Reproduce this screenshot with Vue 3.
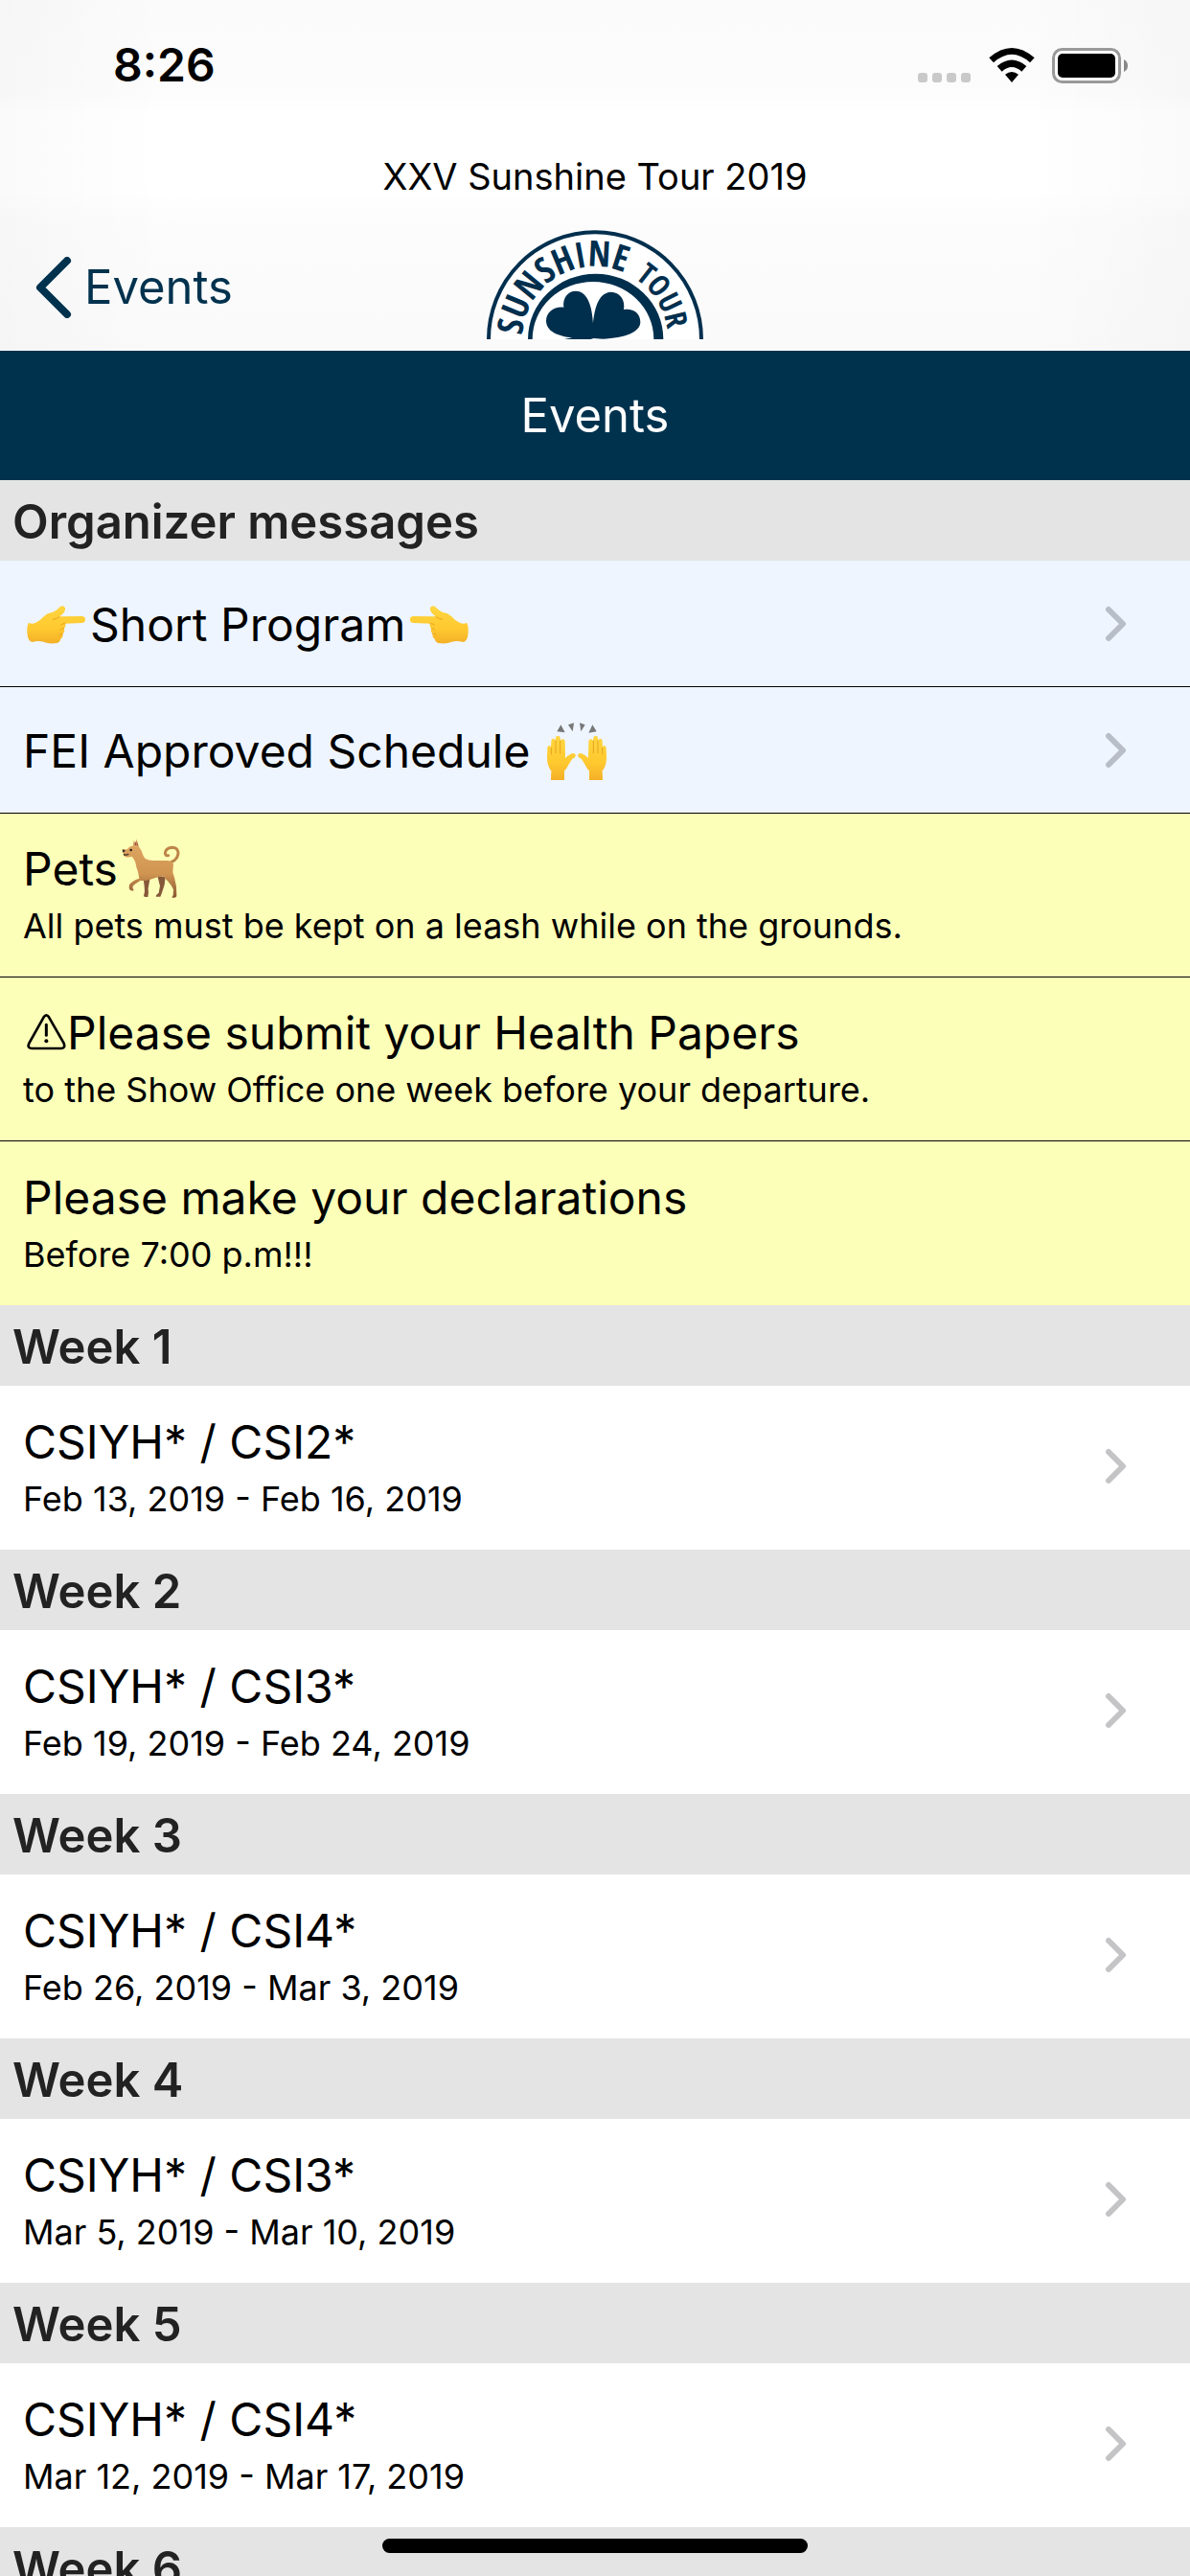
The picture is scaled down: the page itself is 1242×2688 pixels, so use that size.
<template>
  <div class="screen">
    <header class="header">
      <div class="status-bar">
        <span class="clock">8:26</span>
        <div class="status-icons">
          <svg width="55" height="36" viewBox="0 0 55 36" fill="#c9c9c9">
            <rect x="0" y="26" width="10" height="10" rx="3" />
            <rect x="15" y="26" width="10" height="10" rx="3" />
            <rect x="30" y="26" width="10" height="10" rx="3" />
            <rect x="45" y="26" width="10" height="10" rx="3" />
          </svg>
          <svg class="wifi" width="48" height="36" viewBox="0 0 144 108">
            <path d="M1 31Q72-31 143 31L129 46Q72-5 15 46Z" />
            <path d="M26 57Q72 18 118 57L103 74Q72 46 41 74Z" />
            <path d="M51 83Q72 67 93 83L72 108Z" />
          </svg>
          <svg width="80" height="37" viewBox="0 0 80 37">
            <rect x="1.5" y="1.5" width="69" height="34" rx="9" fill="#fff" stroke="#999" stroke-width="3" />
            <rect x="6" y="6" width="60" height="25" rx="5" />
            <path d="M75 12Q79 14 79 18.500Q79 23 75 25Z" fill="#888" />
          </svg>
        </div>
      </div>
      <h1 class="tour-title">XXV Sunshine Tour 2019</h1>
      <nav class="nav-bar">
        <a class="back-link" href="#events">
          <svg width="38" height="64" viewBox="0 0 38 64" fill="none" stroke="#00324e" stroke-width="8" stroke-linecap="round" stroke-linejoin="round">
            <path d="M33 4L5 32L33 60" />
          </svg>
          <span>Events</span>
        </a>
        <svg class="logo" width="226" height="114" viewBox="57 30 678 342">
          <defs>
            <path id="logo-arc" d="M168 372A228 228 0 0 1 624 372" />
          </defs>
          <path d="M57 372A339 341 0 0 1 735 372Z" fill="#fff" />
          <path d="M63 372A333 335 0 0 1 729 372" fill="none" stroke="#002f4e" stroke-width="12" />
          <path d="M186 372A212 205 0 0 1 610 372L580 372A190 180 0 0 0 200 372Z" fill="#002f4e" />
          <text class="logo-bold"><textPath href="#logo-arc" startOffset="12">SUNSHINE</textPath></text>
          <text class="logo-light"><textPath href="#logo-arc" startOffset="490">TOUR</textPath></text>
          <path
            d="M390 322C388 288 380 222 336 221C310 221 294 244 298 272C270 268 243 286 243 314C244 348 280 362 325 367L300 372H382L392 369L420 371C490 368 538 350 538 318C538 290 515 274 486 279C492 250 474 224 446 224C402 226 394 288 390 322Z"
            fill="#002f4e"
          />
        </svg>
      </nav>
    </header>

    <h2 class="page-title">Events</h2>

    <main class="list">
      <section>
        <h3 class="section-title">Organizer messages</h3>
        <a class="row row-link row-single" href="#short-program">
          <div class="row-text">
            <p class="row-title">
              <svg class="emoji" viewBox="84 3 186 186" role="img" aria-label="pointing right">
                <defs>
                  <linearGradient id="skin" x1="0" y1="0" x2="0" y2="1">
                    <stop offset="0" stop-color="#ffd640" />
                    <stop offset="0.6" stop-color="#ffc92f" />
                    <stop offset="1" stop-color="#f4b028" />
                  </linearGradient>
                </defs>
                <path :d="pointingHand" fill="url(#skin)" />
                <path :d="knuckleLines" class="finger-lines" />
              </svg>Short Program<svg class="emoji" viewBox="84 3 186 186" role="img" aria-label="pointing left">
                <g transform="translate(354 0) scale(-1 1)">
                  <path :d="pointingHand" fill="url(#skin)" />
                  <path :d="knuckleLines" class="finger-lines" />
                </g>
              </svg>
            </p>
          </div>
          <svg class="chevron" viewBox="0 0 22 38"><path d="M3 4L18 19L3 34" /></svg>
        </a>
        <a class="row row-link row-single" href="#schedule">
          <div class="row-text">
            <p class="row-title">
              FEI Approved Schedule
              <svg class="emoji" viewBox="519 399 186 186" role="img" aria-label="raised hands">
                <path d="M562 412L575 436L550 433ZM585 412L603 406L599 433ZM621 406L638 412L625 433ZM661 412L674 433L649 437Z" fill="#777" />
                <path :d="raisedHand" fill="url(#skin)" />
                <path :d="fingerLines" class="finger-lines" />
                <g transform="translate(1224 0) scale(-1 1)">
                  <path :d="raisedHand" fill="url(#skin)" />
                  <path :d="fingerLines" class="finger-lines" />
                </g>
              </svg>
            </p>
          </div>
          <svg class="chevron" viewBox="0 0 22 38"><path d="M3 4L18 19L3 34" /></svg>
        </a>
        <div class="row row-notice">
          <div class="row-text">
            <p class="row-title">
              Pets<svg class="emoji" viewBox="385 78 186 186" role="img" aria-label="dog">
                <defs>
                  <linearGradient id="fur" x1="0" y1="0" x2="0" y2="1">
                    <stop offset="0" stop-color="#e0a965" />
                    <stop offset="0.6" stop-color="#cf9450" />
                    <stop offset="1" stop-color="#8a5733" />
                  </linearGradient>
                </defs>
                <path d="M452 196L456 228Q459 242 454 258Q454 262 467 261Q470 250 468 234L474 200ZM497 194Q502 216 505 226L501 248Q490 256 493 260L506 260Q511 250 519 222L522 198Z" fill="#86583a" />
                <path d="M540 152Q562 142 562 122Q560 106 543 106Q522 108 521 124Q523 133 531 131" fill="none" stroke="#bd8449" stroke-width="9" stroke-linecap="round" />
                <path
                  d="M388 113L402 112Q408 102 420 101L423 83L429 94L431 79L439 104Q446 112 449 122Q452 132 458 140Q472 149 492 147L530 147Q543 149 547 158L545 183Q552 204 556 228L557 257Q556 264 543 263Q542 260 546 256L547 238Q540 222 530 212Q522 204 514 195Q492 200 474 206Q458 212 444 209Q436 214 422 224L419 231L423 241Q412 244 408 234L409 222Q420 208 440 203Q438 192 436 182Q430 166 428 153Q424 142 417 134Q408 137 398 136Q388 132 391 127Z"
                  fill="url(#fur)"
                />
                <path d="M425 98L429 86L431 100ZM432 98L432 84L437 101Z" fill="#9b514b" />
                <path d="M387 113Q393 110 397 117L388 122Z" fill="#40302b" />
                <circle cx="414" cy="114" r="4" fill="#281b17" />
                <path d="M391 127Q399 132 407 126" fill="none" stroke="#40302b" stroke-width="4" />
              </svg>
            </p>
            <p class="row-sub">All pets must be kept on a leash while on the grounds.</p>
          </div>
        </div>
        <div class="row row-notice">
          <div class="row-text">
            <p class="row-title">
              <svg class="warning" width="46" height="42" viewBox="72 622 138 126" role="img" aria-label="warning">
                <path d="M137 638Q145 626 153 638L200 720Q206 735 192 736H99Q84 735 91 720Z" fill="none" stroke="#000" stroke-width="8" stroke-linejoin="round" />
                <path d="M145 662V695" stroke="#000" stroke-width="9" stroke-linecap="round" />
                <circle cx="145" cy="713" r="6" />
              </svg>Please submit your Health Papers
            </p>
            <p class="row-sub">to the Show Office one week before your departure.</p>
          </div>
        </div>
        <div class="row row-notice">
          <div class="row-text">
            <p class="row-title">Please make your declarations</p>
            <p class="row-sub">Before 7:00 p.m!!!</p>
          </div>
        </div>
      </section>

      <section v-for="week in weeks" :key="week.name">
        <h3 class="section-title">{{ week.name }}</h3>
        <a class="row" href="#event">
          <div class="row-text">
            <p class="row-title">{{ week.title }}</p>
            <p class="row-sub">{{ week.dates }}</p>
          </div>
          <svg class="chevron" viewBox="0 0 22 38"><path d="M3 4L18 19L3 34" /></svg>
        </a>
      </section>
      <h3 class="section-title">Week 6</h3>
    </main>

    <div class="home-indicator"></div>
  </div>
</template>

<script setup>
const weeks = [
  { name: 'Week 1', title: 'CSIYH* / CSI2*', dates: 'Feb 13, 2019 - Feb 16, 2019' },
  { name: 'Week 2', title: 'CSIYH* / CSI3*', dates: 'Feb 19, 2019 - Feb 24, 2019' },
  { name: 'Week 3', title: 'CSIYH* / CSI4*', dates: 'Feb 26, 2019 - Mar 3, 2019' },
  { name: 'Week 4', title: 'CSIYH* / CSI3*', dates: 'Mar 5, 2019 - Mar 10, 2019' },
  { name: 'Week 5', title: 'CSIYH* / CSI4*', dates: 'Mar 12, 2019 - Mar 17, 2019' }
]

// Emoji outlines that are drawn more than once
const pointingHand =
  'M90 92Q98 98 112 92Q126 86 138 72Q148 62 164 60Q178 54 188 43Q198 35 204 46Q206 58 193 68L186 73L258 72Q268 74 267 84Q266 93 256 93L204 95Q208 104 200 110Q205 120 196 127Q199 138 190 143Q188 155 172 157Q150 159 136 152Q118 147 102 153Q86 152 85 122Q84 100 90 92Z'
const knuckleLines =
  'M186 74Q176 82 166 82M204 95Q196 94 191 99M200 110Q193 110 189 114M196 127Q190 127 186 130'
const raisedHand =
  'M531 585L532 556Q519 540 519 515L520 484Q521 477 527 477Q531 478 531 484L532 462Q533 455 539 455Q545 456 545 462L546 453Q547 446 553 446Q560 447 560 454L561 463Q562 456 569 457Q575 458 575 465L576 516Q590 502 601 501Q610 503 608 510Q606 516 598 518Q590 530 584 541Q580 551 573 556L573 585Z'
const fingerLines = 'M532 484V504M546 462V500M560 462V501'
</script>

<style>
body {
  margin: 0;
}
</style>

<style scoped>
.screen {
  position: relative;
  display: flex;
  flex-direction: column;
  height: 100vh;
  overflow: hidden;
  background: #fff;
  color: #000;
  font-family: Inter, "Liberation Sans", sans-serif;
}

h1,
h2,
h3,
p {
  margin: 0;
}

a {
  color: inherit;
  text-decoration: none;
}

/* Header */
.header {
  flex: none;
  background:
    linear-gradient(90deg, rgba(0, 0, 0, 0.02), transparent 14%, transparent 86%, rgba(0, 0, 0, 0.02)),
    linear-gradient(#fbfbfb 0, #fcfcfc 96px, #fff 120px, #fff 200px, #fcfcfc 230px, #fafafa 100%);
}

.status-bar {
  display: flex;
  align-items: center;
  justify-content: space-between;
  height: 136px;
  padding: 0 64px 0 118px;
}

.clock {
  font-size: 48px;
  font-weight: 600;
  line-height: 60px;
}

.status-icons {
  display: flex;
  align-items: center;
}

.wifi {
  margin: 0 18px 0 19px;
}

.tour-title {
  font-size: 38px;
  font-weight: 400;
  line-height: 48px;
  padding: 24px 0;
  text-align: center;
}

.nav-bar {
  display: grid;
  grid-template-columns: 1fr auto 1fr;
  align-items: end;
  height: 122px;
  padding: 0 37px 12px;
}

.back-link {
  display: flex;
  align-items: center;
  gap: 13px;
  padding-bottom: 22px;
  color: #00324e;
  font-size: 49px;
  line-height: 60px;
}

.logo {
  display: block;
}

.logo-bold,
.logo-light {
  font-family: "Liberation Sans Narrow", "Open Sans Condensed", "DejaVu Sans Condensed", sans-serif;
  fill: #002f4e;
}

.logo-bold {
  font-size: 112px;
  font-weight: 700;
}

.logo-light {
  font-size: 94px;
}

.page-title {
  flex: none;
  padding: 38px 0 37px;
  background: #00324e;
  color: #fff;
  font-size: 49px;
  font-weight: 400;
  line-height: 60px;
  text-align: center;
}

/* List */
.list {
  flex: 1;
  min-height: 0;
  overflow-y: auto;
  scrollbar-width: none;
}

.section-title {
  padding: 14px 13px 10px;
  background: #e4e4e4;
  color: #222;
  font-size: 49px;
  font-weight: 600;
  line-height: 60px;
}

.row {
  display: flex;
  align-items: center;
  justify-content: space-between;
  box-sizing: border-box;
  min-height: 171px;
  padding: 28px 66px 30px 24px;
  background: #fff;
}

.row-single {
  min-height: 132px;
  padding-top: 37px;
  padding-bottom: 34px;
}

.row-link {
  background: #eef5ff;
  border-bottom: 1px solid #000;
}

.row-notice {
  background: #fcffb8;
}

.row-notice:not(:last-child) {
  border-bottom: 1px solid #000;
}

.row-title {
  font-size: 48px;
  line-height: 60px;
}

.row-sub {
  margin-top: 6px;
  font-size: 36px;
  line-height: 46px;
}

.chevron {
  flex: none;
  width: 22px;
  height: 38px;
  margin-bottom: 2px;
  fill: none;
  stroke: #c4c4c6;
  stroke-width: 6;
  stroke-linecap: round;
  stroke-linejoin: round;
}

.row-link .chevron {
  stroke: #b9bdc8;
}

.emoji {
  width: 62px;
  height: 62px;
  margin: -4px 4px;
  vertical-align: -9px;
}

.warning {
  margin: -2px 0;
  vertical-align: -1px;
}

.finger-lines {
  fill: none;
  stroke: #e8a321;
  stroke-width: 3;
  stroke-linecap: round;
}

.home-indicator {
  position: absolute;
  bottom: 24px;
  left: 50%;
  width: 444px;
  height: 15px;
  margin-left: -222px;
  border-radius: 8px;
  background: #000;
}
</style>
